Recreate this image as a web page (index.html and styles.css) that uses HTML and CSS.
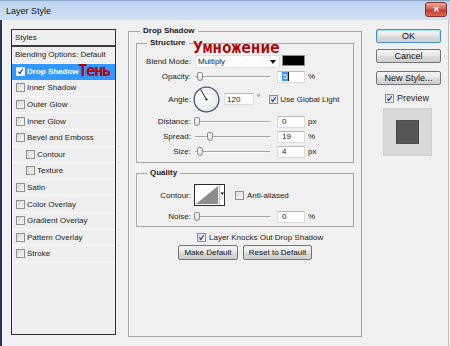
FILE: index.html
```html
<!DOCTYPE html>
<html>
<head>
  <meta charset="UTF-8">
  <title>Layer Style</title>
  <link rel="stylesheet" href="styles.css">
</head>
<body>

  <div class="window">
    <div class="titlebar">
      <span class="title">Layer Style</span>
      <span class="close">&#x2715;</span>
    </div>

    <div class="client">

      <div class="styles-list">
        <div class="list-head">Styles</div>
        <div class="list-row plain">Blending Options: Default</div>
        <div class="list-row selected"><span class="cb on"><svg viewBox="0 0 9 9"><path d="M1.8 4.6 L3.6 7 L7.4 1.6"/></svg></span>Drop Shadow</div>
        <div class="list-row"><span class="cb"></span>Inner Shadow</div>
        <div class="list-row"><span class="cb"></span>Outer Glow</div>
        <div class="list-row"><span class="cb"></span>Inner Glow</div>
        <div class="list-row"><span class="cb"></span>Bevel and Emboss</div>
        <div class="list-row sub"><span class="cb"></span>Contour</div>
        <div class="list-row sub"><span class="cb"></span>Texture</div>
        <div class="list-row"><span class="cb"></span>Satin</div>
        <div class="list-row"><span class="cb"></span>Color Overlay</div>
        <div class="list-row"><span class="cb"></span>Gradient Overlay</div>
        <div class="list-row"><span class="cb"></span>Pattern Overlay</div>
        <div class="list-row"><span class="cb"></span>Stroke</div>
      </div>

      <fieldset class="group outer">
        <legend>Drop Shadow</legend>

        <fieldset class="group inner structure">
          <legend>Structure</legend>

          <div class="row">
            <span class="lbl">Blend Mode:</span>
            <div class="select">
              <span>Multiply</span>
              <svg class="arrow" viewBox="0 0 6 4"><path d="M0 0 H6 L3 4 Z"/></svg>
            </div>
            <span class="swatch"></span>
          </div>

          <div class="row">
            <span class="lbl">Opacity:</span>
            <div class="slider"><span class="thumb" style="left: 2px"></span></div>
            <div class="field"><span class="sel">5</span></div>
            <span class="unit">%</span>
          </div>

          <div class="row angle">
            <span class="lbl">Angle:</span>
            <svg class="dial" viewBox="0 0 27 27">
              <defs>
                <radialGradient id="dialfill" cx="0.4" cy="0.35" r="0.7">
                  <stop offset="0" stop-color="#ffffff"/>
                  <stop offset="1" stop-color="#e6e8ec"/>
                </radialGradient>
              </defs>
              <circle cx="13.5" cy="13.5" r="12.4" fill="url(#dialfill)" stroke="#46577a" stroke-width="1.3"/>
              <line x1="13.5" y1="13.5" x2="7.6" y2="3.4" stroke="#1c1c1c" stroke-width="1"/>
              <circle cx="13.5" cy="13.5" r="1.1" fill="#1c1c1c"/>
            </svg>
            <div class="field narrow">120</div>
            <span class="deg">&deg;</span>
            <span class="cb on gl"><svg viewBox="0 0 9 9"><path d="M1.8 4.6 L3.6 7 L7.4 1.6"/></svg></span>
            <span>Use Global Light</span>
          </div>

          <div class="row">
            <span class="lbl">Distance:</span>
            <div class="slider"><span class="thumb" style="left: -1px"></span></div>
            <div class="field">0</div>
            <span class="unit">px</span>
          </div>

          <div class="row">
            <span class="lbl">Spread:</span>
            <div class="slider"><span class="thumb" style="left: 12px"></span></div>
            <div class="field">19</div>
            <span class="unit">%</span>
          </div>

          <div class="row">
            <span class="lbl">Size:</span>
            <div class="slider"><span class="thumb" style="left: 2px"></span></div>
            <div class="field">4</div>
            <span class="unit">px</span>
          </div>
        </fieldset>

        <fieldset class="group inner quality">
          <legend>Quality</legend>

          <div class="row contour-row">
            <span class="lbl">Contour:</span>
            <svg class="contour" viewBox="0 0 31 22">
              <rect x="0.5" y="0.5" width="30" height="21" fill="#fff" stroke="#2b2b2b"/>
              <polygon points="2,20 24,2 24,20" fill="#8c8c8c"/>
              <line x1="25.5" y1="1" x2="25.5" y2="21" stroke="#bdbdbd"/>
              <path d="M26.5 8.5 H30 L28.25 11 Z" fill="#111"/>
            </svg>
            <span class="cb aa"></span>
            <span>Anti-aliased</span>
          </div>

          <div class="row">
            <span class="lbl">Noise:</span>
            <div class="slider"><span class="thumb" style="left: -1px"></span></div>
            <div class="field">0</div>
            <span class="unit">%</span>
          </div>
        </fieldset>

        <div class="knock">
          <span class="cb on"><svg viewBox="0 0 9 9"><path d="M1.8 4.6 L3.6 7 L7.4 1.6"/></svg></span>
          <span>Layer Knocks Out Drop Shadow</span>
        </div>

        <div class="defaults">
          <button class="btn make">Make Default</button>
          <button class="btn reset">Reset to Default</button>
        </div>
      </fieldset>

      <div class="side">
        <button class="btn big ok">OK</button>
        <button class="btn big">Cancel</button>
        <button class="btn big">New Style...</button>
        <div class="preview-check">
          <span class="cb on"><svg viewBox="0 0 9 9"><path d="M1.8 4.6 L3.6 7 L7.4 1.6"/></svg></span>
          <span>Preview</span>
        </div>
        <div class="preview"><span class="preview-square"></span></div>
      </div>

    </div>

    <span class="note note-ten">Тень</span>
    <span class="note note-mult">Умножение</span>
  </div>

</body>
</html>
```

FILE: styles.css
```css
* {
  box-sizing: border-box;
}
body {
  margin: 0;
  width: 450px;
  height: 346px;
  overflow: hidden;
  font-family: "Liberation Sans", Arial, sans-serif;
  font-size: 8px;
  color: #222;
  background: #f0f0f0;
}
.window {
  position: relative;
  height: 346px;
  display: flex;
  flex-direction: column;
}

/* title bar */
.titlebar {
  height: 20px;
  flex: none;
  display: flex;
  align-items: center;
  justify-content: space-between;
  padding: 0 3px 0 6px;
  background: linear-gradient(#bdd3ee, #cfdff3);
  border-top: 1px solid #8aa7cc;
}
.title {
  font-size: 9px;
  color: #151515;
}
.close {
  width: 22px;
  height: 15px;
  margin-top: -3px;
  display: flex;
  align-items: center;
  justify-content: center;
  border: 1px solid #7e3328;
  border-radius: 3px;
  background: linear-gradient(#eaa899, #d7634f 48%, #c23a2b 52%, #d86a52);
  color: #fff;
  font-size: 8px;
  font-weight: bold;
}

/* client area */
.client {
  flex: 1;
  display: flex;
  align-items: flex-start;
  padding: 6px 0 0 9px;
  border-left: 2px solid #24365a;
  border-right: 1px solid #c0c0c0;
  margin-right: 1px;
}

/* styles list */
.styles-list {
  width: 105px;
  height: 306px;
  margin-top: 3px;
  border: 1px solid #2f2f2f;
  background: #efefef;
}
.list-head {
  height: 17px;
  padding-left: 3px;
  display: flex;
  align-items: center;
  border-bottom: 2px solid #3b3b3b;
}
.list-row {
  height: 16.6px;
  display: flex;
  align-items: center;
  padding-left: 4px;
  border-bottom: 1px solid #f9f9f9;
}
.list-row.plain {
  padding-left: 3px;
}
.list-row.sub {
  padding-left: 14px;
}
.list-row .cb {
  margin-right: 2px;
}
.list-row.selected {
  background: #3399ff;
  color: #fff;
  font-weight: bold;
  border-bottom-color: #3399ff;
}

/* checkboxes */
.cb {
  width: 9px;
  height: 9px;
  flex: none;
  border: 1px solid #8f8f8f;
  background: linear-gradient(135deg, #d8d8d8, #f8f8f8);
  display: inline-flex;
}
.cb svg {
  width: 7px;
  height: 7px;
}
.cb path {
  fill: none;
  stroke: #1f3f97;
  stroke-width: 1.5;
}
.list-row.selected .cb {
  border-color: #e6e6e6;
  background: #fff;
}

/* group boxes */
.group {
  margin: 0;
  border: 1px solid #a6a6a6;
  min-width: 0;
}
.group legend {
  font-weight: bold;
  line-height: 10px;
  padding: 0 3px;
}
.outer {
  width: 234px;
  height: 311px;
  margin-left: 12px;
  padding: 2px 7px 0 7px;
}
.outer > legend {
  margin-left: 4px;
}
.inner {
  padding: 0;
}
.inner > legend {
  margin-left: 10px;
}
.structure {
  padding: 6px 0 3px 0;
}
.quality {
  margin-top: 5px;
  padding: 5px 0 2px 0;
}

/* rows */
.row {
  height: 15px;
  display: flex;
  align-items: center;
}
.row.angle {
  height: 30px;
}
.row.contour-row {
  height: 24px;
  margin-bottom: 2px;
}
.lbl {
  width: 54px;
  margin-right: 4px;
  text-align: right;
  flex: none;
}
.select {
  width: 85px;
  height: 13px;
  display: flex;
  align-items: center;
  justify-content: space-between;
  padding: 0 3px 0 2px;
  background: #fff;
  border: 1px solid #e0e0e0;
}
.arrow {
  width: 6px;
  height: 4px;
  fill: #111;
}
.swatch {
  width: 23px;
  height: 11px;
  margin-left: 2px;
  margin-top: -2px;
  background: #000;
  border: 1px solid #8c8c8c;
}
.slider {
  position: relative;
  width: 75px;
  height: 11px;
  flex: none;
}
.slider::before {
  content: "";
  position: absolute;
  left: 0;
  right: 0;
  top: 5px;
  border-top: 1px solid #a3a3a3;
  border-bottom: 1px solid #fff;
}
.thumb {
  position: absolute;
  top: 1px;
  width: 6px;
  height: 9px;
  border: 1px solid #8a8a8a;
  border-radius: 2px 2px 3px 3px;
  background: linear-gradient(#fdfdfd, #dcdcdc);
}
.field {
  width: 28px;
  height: 12px;
  margin-left: 7px;
  padding-left: 4px;
  display: flex;
  align-items: center;
  background: #fff;
  border: 1px solid #dadada;
  border-top-color: #b8b8b8;
  flex: none;
}
.field.narrow {
  width: 30px;
  margin-left: 4px;
  padding-left: 2px;
}
.sel {
  background: #3399ff;
  color: #fff;
  padding: 0 1px;
  border-right: 1px solid #111;
}
.unit {
  margin-left: 3px;
}
.deg {
  margin-left: 3px;
  align-self: flex-start;
  margin-top: 9px;
}
.cb.gl {
  margin-left: 9px;
  margin-right: 2px;
}
.dial {
  width: 27px;
  height: 27px;
  margin-left: -2px;
  flex: none;
}
.contour {
  width: 31px;
  height: 22px;
  margin-left: -1px;
  flex: none;
}
.cb.aa {
  margin-left: 10px;
  margin-right: 3px;
}

/* below the groups */
.knock {
  height: 13px;
  margin-top: 4px;
  margin-left: 61px;
  display: flex;
  align-items: center;
  gap: 3px;
}
.defaults {
  margin-top: 1px;
  display: flex;
  justify-content: center;
  gap: 5px;
}
.btn {
  height: 15px;
  padding: 0;
  font: inherit;
  color: #111;
  border: 1px solid #737373;
  border-radius: 2px;
  background: linear-gradient(#f5f5f5, #e8e8e8 48%, #dadada 52%, #cfcfcf);
}
.btn.make {
  width: 60px;
}
.btn.reset {
  width: 69px;
}

/* right column */
.side {
  width: 65px;
  margin-left: 14px;
  margin-top: 3px;
  display: flex;
  flex-direction: column;
}
.btn.big {
  height: 14px;
  font-size: 9px;
  margin-bottom: 8px;
}
.btn.ok {
  margin-bottom: 6px;
  border-color: #3a8fd8;
  box-shadow: inset 0 0 0 1px #a6e2fb;
}
.preview-check {
  height: 10px;
  margin-left: 9px;
  display: flex;
  align-items: center;
  gap: 3px;
  font-size: 9px;
}
.preview {
  width: 49px;
  height: 48px;
  margin: 5px 0 0 7px;
  display: flex;
  align-items: center;
  justify-content: center;
  background: #d9d9d9;
  border: 1px solid #cdcdcd;
}
.preview-square {
  width: 23px;
  height: 24px;
  background: #555;
  border: 1px solid #474747;
}

/* red annotations */
.note {
  position: absolute;
  font-family: "DejaVu Sans Mono", "Liberation Mono", monospace;
  font-weight: bold;
  font-size: 16px;
  line-height: 16px;
  color: #a80a0a;
}
.note-ten {
  left: 78px;
  top: 63px;
  letter-spacing: -1.6px;
}
.note-mult {
  left: 193px;
  top: 40px;
}
```
